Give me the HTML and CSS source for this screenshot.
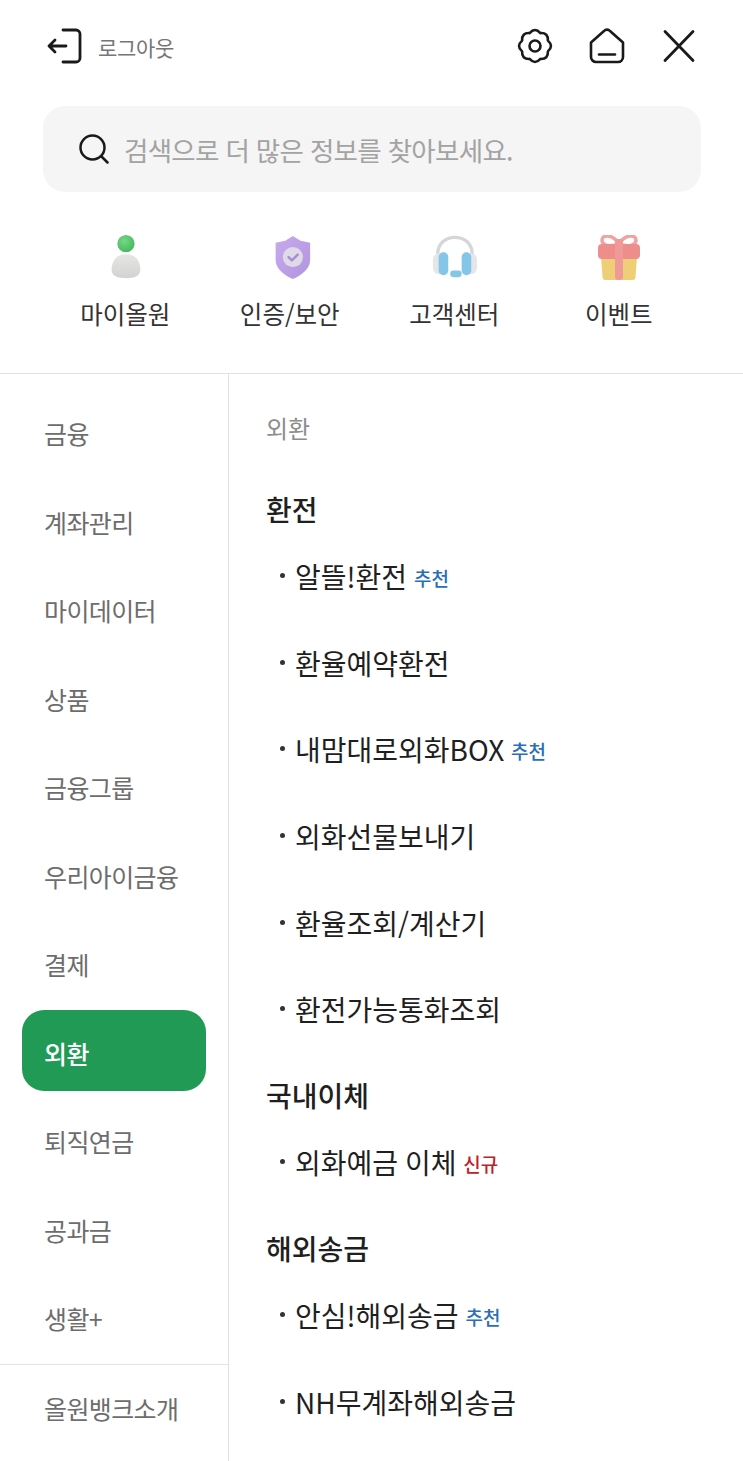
FILE: index.html
```html
<!DOCTYPE html>
<html lang="ko">
<head>
    <meta charset="UTF-8">
    <meta name="viewport" content="width=device-width, initial-scale=1.0">
    <title>전체메뉴</title>
    <link rel="stylesheet" href="styles.css">
</head>
<body>
    <header class="top-bar">
        <a class="logout">
            <svg class="logout-icon" viewBox="0 0 36 36" fill="none" stroke="#1a1a1a" stroke-width="2.8" stroke-linecap="round" stroke-linejoin="round">
                <path d="M16 2h13a4 4 0 0 1 4 4v24a4 4 0 0 1-4 4H16"/>
                <path d="M2 18h17M8 12 2 18l6 6"/>
            </svg>
            <span>로그아웃</span>
        </a>
        <div class="top-icons">
            <svg class="top-icon" viewBox="0 0 36 36" fill="none" stroke="#1a1a1a" stroke-width="2.6" stroke-linejoin="round">
                <path d="M23.4 5.100Q31.400 4.600 30.900 12.600 37 18 30.900 23.400 31.400 31.400 23.400 30.900 18 37 12.600 30.900 4.600 31.400 5.100 23.400-1 18 5.100 12.600 4.600 4.600 12.600 5.100 18-1 23.400 5.100Z"/>
                <circle cx="18" cy="18" r="5.500"/>
            </svg>
            <svg class="top-icon" viewBox="0 0 36 36" fill="none" stroke="#1a1a1a" stroke-width="2.600" stroke-linecap="round" stroke-linejoin="round">
                <path d="M2 14.500 15 3a4 4 0 0 1 6 0L34 14.500V29a5 5 0 0 1-5 5H7a5 5 0 0 1-5-5Z"/>
                <path d="M10 26.500h16"/>
            </svg>
            <svg class="top-icon" viewBox="0 0 36 36" fill="none" stroke="#1a1a1a" stroke-width="2.800" stroke-linecap="round">
                <path d="M4 3.500 32 32.500M32 3.500 4 32.500"/>
            </svg>
        </div>
    </header>

    <div class="search">
        <svg class="search-icon" viewBox="0 0 30 30" fill="none" stroke="#1a1a1a" stroke-width="2.500" stroke-linecap="round">
            <circle cx="13.500" cy="13.500" r="12"/>
            <path d="M22.500 22.500l6 6"/>
        </svg>
        <span>검색으로 더 많은 정보를 찾아보세요.</span>
    </div>

    <div class="shortcuts">
        <a class="shortcut">
            <svg class="shortcut-icon" viewBox="-1 0 48 48">
                <defs>
                    <radialGradient id="headFill" cx="0.4" cy="0.35" r="0.7">
                        <stop offset="0" stop-color="#74d884"/>
                        <stop offset="1" stop-color="#46b65c"/>
                    </radialGradient>
                    <linearGradient id="bodyFill" x1="0" y1="0" x2="0" y2="1">
                        <stop offset="0" stop-color="#e6e6e4"/>
                        <stop offset="1" stop-color="#d2d2d0"/>
                    </linearGradient>
                </defs>
                <circle cx="24" cy="9" r="9" fill="url(#headFill)"/>
                <path d="M9 36C9 26 15 20 24 20s15 6 15 16c0 7-6 9-15 9S9 43 9 36Z" fill="url(#bodyFill)"/>
            </svg>
            <span>마이올원</span>
        </a>
        <a class="shortcut">
            <svg class="shortcut-icon" viewBox="-3 0 48 48">
                <defs>
                    <linearGradient id="shieldFill" x1="0" y1="0" x2="1" y2="1">
                        <stop offset="0" stop-color="#c6aaec"/>
                        <stop offset="1" stop-color="#b294e0"/>
                    </linearGradient>
                </defs>
                <path d="M24 1 32 6 42 8V26C42 36 32 42 24 46 16 42 6 36 6 26V8L16 6Z" fill="url(#shieldFill)"/>
                <circle cx="24" cy="23" r="10.500" fill="#e0dae6"/>
                <path d="M19.500 23l3.500 3.500 6-6" fill="none" stroke="#a68cd0" stroke-width="2.500" stroke-linecap="round" stroke-linejoin="round"/>
            </svg>
            <span>인증/보안</span>
        </a>
        <a class="shortcut">
            <svg class="shortcut-icon" viewBox="-1 0 48 48">
                <path d="M6 24V20C6 9 14 2.500 24 2.500S42 9 42 20v4" fill="none" stroke="#d4d6d8" stroke-width="3.500"/>
                <rect x="1" y="19" width="13" height="22" rx="6.500" fill="#e4e6e8"/>
                <rect x="34" y="19" width="13" height="22" rx="6.500" fill="#e4e6e8"/>
                <rect x="7" y="18" width="10" height="24" rx="5" fill="#84c6e8"/>
                <rect x="31" y="18" width="10" height="24" rx="5" fill="#84c6e8"/>
                <rect x="19" y="37" width="12" height="7" rx="3.500" fill="#84c6e8"/>
            </svg>
            <span>고객센터</span>
        </a>
        <a class="shortcut">
            <svg class="shortcut-icon" viewBox="-1 0 46 46">
                <path d="M22 9C16-1 5-1 5 5s9 7 17 4ZM22 9C28-1 39-1 39 5s-9 7-17 4Z" fill="none" stroke="#f0a3a1" stroke-width="3.500" stroke-linejoin="round"/>
                <path d="M4 22H40L38.500 42a3 3 0 0 1-3 3H8.500a3 3 0 0 1-3-3Z" fill="#eecf78"/>
                <rect x="1" y="9" width="42" height="15" rx="4" fill="#ee8e8c"/>
                <rect x="18" y="4" width="8" height="41" rx="3" fill="#f09a97"/>
            </svg>
            <span>이벤트</span>
        </a>
    </div>

    <div class="menu">
        <nav class="side">
            <div class="side-main">
                <a class="side-item">금융</a>
                <a class="side-item">계좌관리</a>
                <a class="side-item">마이데이터</a>
                <a class="side-item">상품</a>
                <a class="side-item">금융그룹</a>
                <a class="side-item">우리아이금융</a>
                <a class="side-item">결제</a>
                <a class="side-item active">외환</a>
                <a class="side-item">퇴직연금</a>
                <a class="side-item">공과금</a>
                <a class="side-item">생활+</a>
            </div>
            <a class="side-item side-bottom">올원뱅크소개</a>
        </nav>

        <section class="detail">
            <p class="crumb">외환</p>

            <h3 class="group first">환전</h3>
            <a class="link">알뜰!환전 <em class="tag blue">추천</em></a>
            <a class="link">환율예약환전</a>
            <a class="link">내맘대로외화BOX <em class="tag blue">추천</em></a>
            <a class="link">외화선물보내기</a>
            <a class="link">환율조회/계산기</a>
            <a class="link">환전가능통화조회</a>

            <h3 class="group">국내이체</h3>
            <a class="link">외화예금 이체 <em class="tag red">신규</em></a>

            <h3 class="group">해외송금</h3>
            <a class="link">안심!해외송금 <em class="tag blue">추천</em></a>
            <a class="link">NH무계좌해외송금</a>
        </section>
    </div>
</body>
</html>
```

FILE: styles.css
```css
* {
    box-sizing: border-box;
}
html, body {
    height: 1461px;
    overflow: hidden;
}
body {
    margin: 0;
    background-color: #ffffff;
    color: #1f1f1f;
    font-family: "Noto Sans CJK KR", "Noto Sans", sans-serif;
}
.top-bar {
    display: flex;
    justify-content: space-between;
    align-items: center;
    height: 92px;
    padding: 0 46px 0 47px;
}
.logout {
    display: flex;
    align-items: center;
    gap: 15px;
    color: #767676;
    font-size: 21px;
    letter-spacing: -0.3px;
}
.logout span {
    padding-top: 2px;
}
.logout-icon {
    width: 36px;
    height: 36px;
}
.top-icons {
    display: flex;
    align-items: center;
    gap: 36px;
}
.top-icon {
    width: 36px;
    height: 36px;
}
.search {
    display: flex;
    align-items: center;
    gap: 15px;
    height: 86px;
    margin: 14px 42px 0 43px;
    padding-left: 36px;
    background-color: #f5f5f5;
    border-radius: 22px;
    color: #a3a3a3;
    font-size: 26.500px;
    letter-spacing: -0.700px;
}
.search-icon {
    width: 30px;
    height: 30px;
}
.shortcuts {
    display: flex;
    height: 182px;
    padding: 43px 42px 0 43px;
    border-bottom: 1px solid #e2e2e2;
}
.shortcut {
    flex: 1;
    display: flex;
    flex-direction: column;
    align-items: center;
    gap: 15px;
    font-size: 24.500px;
    color: #333333;
}
.shortcut-icon {
    width: 46px;
    height: 46px;
}
.menu {
    display: flex;
    height: 1088px;
}
.side {
    width: 229px;
    flex-shrink: 0;
    border-right: 1px solid #e2e2e2;
}
.side-main {
    height: 991px;
    padding: 15px 22px 0 22px;
    border-bottom: 1px solid #e2e2e2;
}
.side-item {
    display: flex;
    align-items: center;
    height: 88.500px;
    padding-left: 22px;
    color: #6d6d6d;
    font-size: 25px;
    letter-spacing: -0.600px;
    white-space: nowrap;
}
.side-item.active {
    height: 81px;
    margin: 1.500px 0 6px;
    padding-top: 5px;
    background-color: #209a55;
    border-radius: 22px;
    color: #ffffff;
    font-weight: 500;
}
.side-bottom {
    height: 86.500px;
    padding-left: 44px;
}
.detail {
    flex: 1;
    padding: 35px 0 0 37px;
}
.crumb {
    margin: 0;
    height: 38px;
    line-height: 38px;
    color: #8d8d8d;
    font-size: 24px;
}
.group {
    margin: 22px 0 0;
    height: 44px;
    line-height: 44px;
    font-size: 28px;
    font-weight: 500;
}
.group.first {
    margin-top: 40px;
}
.link {
    display: block;
    position: relative;
    height: 86.700px;
    padding: 23px 0 0 29px;
    line-height: 44px;
    font-size: 28px;
    word-spacing: -1px;
    white-space: nowrap;
}
.link::before {
    content: "";
    position: absolute;
    left: 13.500px;
    top: 42px;
    width: 5px;
    height: 5px;
    border-radius: 50%;
    background-color: #333333;
}
.tag {
    font-style: normal;
    font-size: 19px;
    font-weight: 500;
    vertical-align: 2px;
}
.tag.blue {
    color: #2a6fb5;
}
.tag.red {
    color: #c0202a;
}
```
